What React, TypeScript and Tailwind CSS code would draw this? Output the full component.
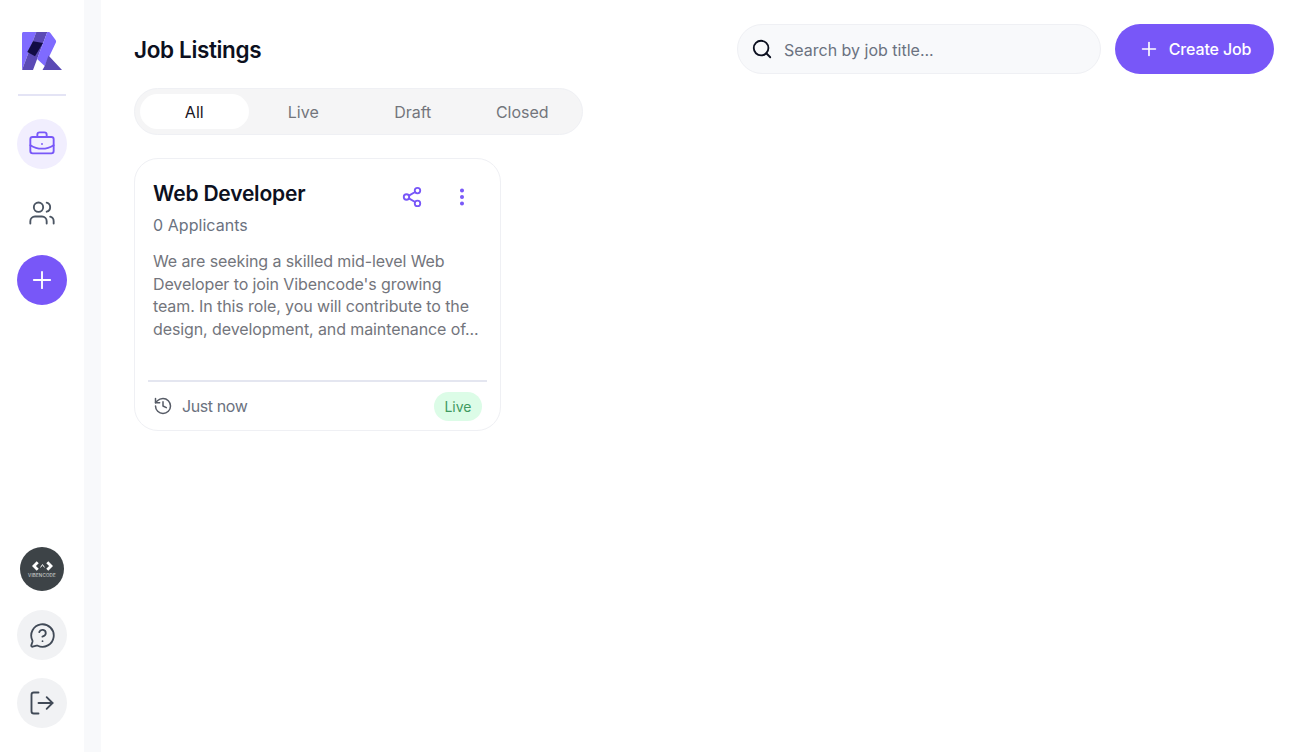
import { BriefcaseBusiness, History, LogOut, MessageCircleQuestion, MoreVertical, Plus, Search, Share2, Users } from "lucide-react"

const tabs = ["All", "Live", "Draft", "Closed"]

const Logo = () => (
    <svg viewBox="0 0 40 38" className="w-10 h-[38px]">
        <path d="M1.5 0H14.3L0 38V1.5C0 .7 .7 0 1.5 0Z" fill="#7F6BFF" />
        <path d="M14.3 0H25.3L11 38H1.5C.7 38 0 37.3 0 36.5V38Z" fill="#5B4AB5" />
        <path d="M11 9.3L21 11L13 24.3L5.3 20Z" fill="#120C45" />
        <path d="M25.3 0H26.5C27.3 0 28 .4 28.4 1L33.6 8C34.2 8.8 34.3 9.6 33.9 10.4L22.7 34L15.1 27Z" fill="#7F6BFF" />
        <path d="M26.5 23.5L40 38H20.5L22.7 34Z" fill="#5B4AB5" />
    </svg>
)

const VibencodeAvatar = () => (
    <div className="w-11 h-11 rounded-full bg-[#3d4347] flex flex-col items-center justify-center">
        <svg viewBox="0 0 22 10" className="w-[21px] h-[10px] mb-[2px]" fill="none" stroke="white">
            <path d="M6 1L2 5L6 9" strokeWidth="3" />
            <path d="M16 1L20 5L16 9" strokeWidth="3" />
            <path d="M9 6.5L11 3.5L13 6.5" strokeWidth="1" />
        </svg>
        <span className="text-[4.5px] leading-[5px] text-white/80 tracking-[0.2px]">VIBENCODE</span>
    </div>
)

export default function App() {
    return (
        <div className="flex h-screen bg-white font-['Inter','Liberation_Sans',sans-serif] overflow-hidden">
            {/* Sidebar */}
            <aside className="w-[84px] shrink-0 flex flex-col items-center pt-[32px] pb-[24px]">
                <Logo />
                <div className="w-[48px] h-[2px] bg-[#e4e4f5] mt-[24px] mb-[23px]" />
                <button className="w-[50px] h-[50px] rounded-full bg-[#f1eefe] flex items-center justify-center text-[#7857f8]">
                    <BriefcaseBusiness className="w-[28px] h-[28px]" strokeWidth={1.6} />
                </button>
                <button className="w-[50px] h-[50px] mt-[19px] rounded-full flex items-center justify-center text-[#4b5563]">
                    <Users className="w-[28px] h-[28px]" strokeWidth={1.6} />
                </button>
                <button className="w-[50px] h-[50px] mt-[17px] rounded-full bg-[#7857f8] flex items-center justify-center text-white">
                    <Plus className="w-[28px] h-[28px]" strokeWidth={1.6} />
                </button>
                <div className="mt-auto flex flex-col items-center">
                    <VibencodeAvatar />
                    <button className="w-[50px] h-[50px] mt-[19px] rounded-full bg-[#f1f2f4] flex items-center justify-center text-[#414a57]">
                        <MessageCircleQuestion className="w-[27px] h-[27px]" strokeWidth={1.6} />
                    </button>
                    <button className="w-[50px] h-[50px] mt-[18px] rounded-full bg-[#f1f2f4] flex items-center justify-center text-[#414a57]">
                        <LogOut className="w-[28px] h-[28px]" strokeWidth={1.6} />
                    </button>
                </div>
            </aside>

            <div className="w-[17px] shrink-0 bg-[#f8f9fb]" />

            {/* Main */}
            <main className="flex-1 pl-[33px] pr-[32px] pt-[24px]">
                <div className="flex items-center justify-between h-[50px]">
                    <h1 className="pt-[2px] text-[22.5px] font-semibold text-[#0c1020] tracking-[-0.35px]">Job Listings</h1>
                    <div className="flex items-center gap-[14px]">
                        <div className="w-[364px] h-[50px] rounded-full bg-[#f8f9fb] border border-[#eff0f4] flex items-center pl-[13px]">
                            <Search className="w-[22px] h-[22px] text-[#0c1020]" strokeWidth={2} />
                            <span className="ml-[11px] pt-[2px] text-[16px] text-[#6b7280] tracking-[0px]">Search by job title...</span>
                        </div>
                        <button className="w-[159px] h-[50px] rounded-full bg-[#7857f8] flex items-center justify-center gap-[9px] text-white text-[16px] font-medium tracking-[-0.15px]">
                            <Plus className="w-[22px] h-[22px]" strokeWidth={1.8} />
                            Create Job
                        </button>
                    </div>
                </div>

                <div className="mt-[14px] w-[449px] h-[47px] rounded-full bg-[#f5f5f6] border border-[#eff0f4] flex items-center px-[5px]">
                    {tabs.map((tab, i) => (
                        <div
                            key={tab}
                            className={
                                i === 0
                                    ? "w-[109px] h-[35px] rounded-full bg-white flex items-center justify-center text-[16px] text-[#1a1523]"
                                    : "w-[110px] h-[35px] rounded-full flex items-center justify-center text-[16px] text-[#73757c]"
                            }
                        >
                            {tab}
                        </div>
                    ))}
                </div>

                {/* Job card */}
                <div className="mt-[23px] w-[367px] h-[273px] rounded-[24px] border border-[#eff0f4] bg-white flex flex-col">
                    <div className="flex-1 px-[18px] pt-[21px]">
                        <div className="flex items-start justify-between h-[28px]">
                            <h2 className="text-[21px] leading-[28px] font-semibold text-[#0c1020] tracking-[-0.2px]">Web Developer</h2>
                            <div className="flex items-center gap-[28px] pr-[9px] pt-[6px] text-[#7857f8]">
                                <Share2 className="w-[22px] h-[22px]" strokeWidth={2} />
                                <MoreVertical className="w-[22px] h-[22px]" strokeWidth={2.4} />
                            </div>
                        </div>
                        <p className="mt-[5px] text-[16px] leading-[24px] text-[#6b7280] tracking-[0.05px]">0 Applicants</p>
                        <p className="mt-[13px] text-[16px] leading-[22.7px] text-[#73757c] tracking-[-0.1px] whitespace-nowrap">
                            We are seeking a skilled mid-level Web<br />
                            Developer to join Vibencode's growing<br />
                            team. In this role, you will contribute to the<br />
                            design, development, and maintenance of...
                        </p>
                    </div>
                    <div className="mx-[13px] h-[2px] bg-[#e4e6f0]" />
                    <div className="h-[48px] pl-[18px] pr-[18px] flex items-center justify-between">
                        <div className="flex items-center gap-[9px] text-[#6b7280]">
                            <History className="w-[20px] h-[20px] text-[#565b66]" strokeWidth={1.8} />
                            <span className="text-[16px] tracking-[-0.4px]">Just now</span>
                        </div>
                        <span className="w-[48px] h-[29px] rounded-full bg-[#dcfce7] flex items-center justify-center text-[14px] text-[#3f9a5f]">Live</span>
                    </div>
                </div>
            </main>
        </div>
    )
}
